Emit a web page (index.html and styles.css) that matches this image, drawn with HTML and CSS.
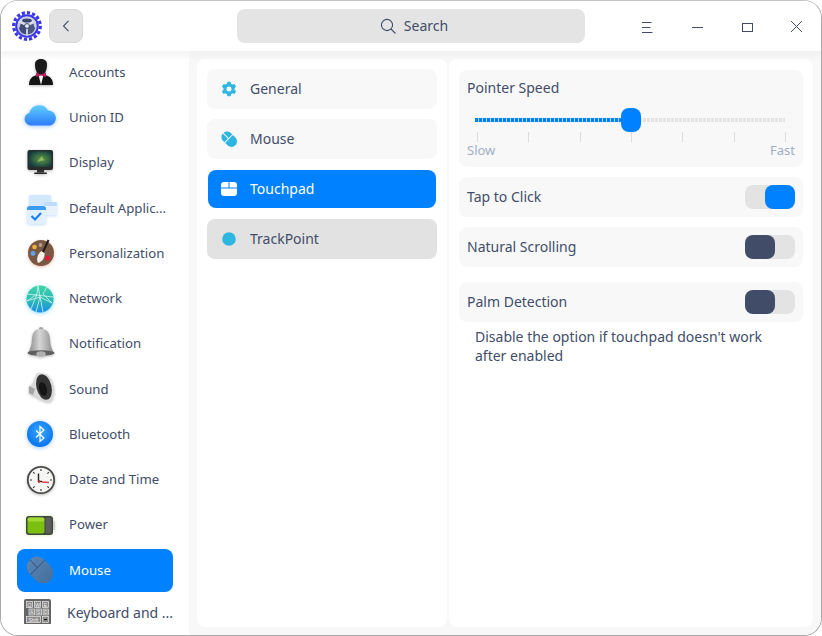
FILE: index.html
```html
<!DOCTYPE html>
<html lang="en">
<head>
<meta charset="utf-8">
<title>Control Center</title>
<link rel="stylesheet" href="styles.css">
</head>
<body>
<div class="window">
  <header class="titlebar">
    <svg class="logo" width="30" height="30" viewBox="0 0 30 30">
      <circle cx="15" cy="15" r="13.300" fill="none" stroke="#3b37e6" stroke-width="3.200" stroke-dasharray="3.200 1.980"/>
      <circle cx="15" cy="15" r="11.800" fill="#3b37e6"/>
      <circle cx="15" cy="15" r="9.800" fill="#c9cddd"/>
      <path d="M15 15 L8 10.500 A8.500 8.500 0 0 1 22 10.500 Z" fill="#d5d8e4"/>
      <ellipse cx="15" cy="9.500" rx="4.800" ry="2" fill="#3a4570"/>
      <path d="M15 15 L15 23.500 A8.500 8.500 0 0 1 7 17.500 L9 12 Z" fill="#414d78"/>
      <path d="M15 15 L21 12 L23 17.500 A8.500 8.500 0 0 1 15 23.500 Z" fill="#4c5883"/>
      <path d="M15 15 L15 24.500M15 15 L6.800 10.300M15 15 L23.200 10.300" stroke="#dfe1ea" stroke-width="1.700"/>
      <circle cx="15" cy="15" r="2.400" fill="#eceef4" stroke="#39446e" stroke-width="1"/>
    </svg>
    <button class="back" type="button" aria-label="Back">
      <svg width="8" height="12" viewBox="0 0 8 12"><path d="M6.500 .800 L1.500 6 L6.500 11.200" fill="none" stroke="#414d68" stroke-width="1.100"/></svg>
    </button>
    <div class="search">
      <svg width="17" height="17" viewBox="0 0 17 17"><circle cx="7" cy="7" r="5.600" fill="none" stroke="#414d68" stroke-width="1.100"/><path d="M11 11 L15.500 15.500" stroke="#414d68" stroke-width="1.100"/></svg>
      <span>Search</span>
    </div>
    <div class="controls">
      <svg class="ctl" width="50" height="50" viewBox="0 0 50 50"><path d="M21 21.500h9.500M21 26.500h8.500M21 31.500h10.500" stroke="#414d68" stroke-width="1" fill="none"/></svg>
      <svg class="ctl" width="50" height="50" viewBox="0 0 50 50"><path d="M21 26.500h11" stroke="#414d68" stroke-width="1" fill="none"/></svg>
      <svg class="ctl" width="50" height="50" viewBox="0 0 50 50"><rect x="21.500" y="22.500" width="10" height="8" stroke="#414d68" stroke-width="1" fill="none"/></svg>
      <svg class="ctl" width="50" height="50" viewBox="0 0 50 50"><path d="M20 20 L31 31M31 20 L20 31" stroke="#414d68" stroke-width="1" fill="none"/></svg>
    </div>
  </header>
  <div class="main">
    <nav class="sidebar">
      <a class="nav-item">
        <svg class="nav-icon shadow" width="36" height="36" viewBox="0 0 36 36"><path d="M7 30c0-6 3-9 8-10h8c5 1 8 4 8 10z" fill="#141414"/><path d="M13 9c0-3.500 3-5 6-5s6 1.500 6 5c0 6-2 11-6 11s-6-5-6-11z" fill="#1a1a1a"/><path d="M16.500 20l2.500 10 2.500-10z" fill="#f4f4f4"/><path d="M14 17.500l5 2 5-2v4.500l-5-1.500-5 1.500z" fill="#b5215f"/></svg>
        <span>Accounts</span>
      </a>
      <a class="nav-item">
        <svg class="nav-icon glow-blue" width="36" height="36" viewBox="0 0 36 36"><defs><linearGradient id="cloud" x1="0" y1="0" x2="0" y2="1"><stop offset="0" stop-color="#5fd0fb"/><stop offset="1" stop-color="#2d7bfb"/></linearGradient></defs><path d="M9 29a6.500 6.500 0 0 1-1.500-12.800A10 10 0 0 1 26 14a7.600 7.600 0 0 1 2 15z" fill="url(#cloud)" transform="translate(0 -3.500)"/></svg>
        <span>Union ID</span>
      </a>
      <a class="nav-item">
        <svg class="nav-icon shadow" width="36" height="36" viewBox="0 0 36 36"><defs><radialGradient id="scr" cx=".55" cy=".5" r=".6"><stop offset="0" stop-color="#5e9a4a"/><stop offset="1" stop-color="#123a3e"/></radialGradient></defs><rect x="5.500" y="5" width="25.500" height="20" rx="2" fill="#2b2b2b"/><rect x="6.700" y="6.300" width="23" height="15.500" fill="url(#scr)"/><path d="M15 17l5-6 1 3 2 1-5 1z" fill="#8fbf5a"/><rect x="15" y="25" width="7" height="2.500" fill="#333"/><rect x="12" y="27.500" width="13" height="1.500" rx=".7" fill="#2b2b2b"/></svg>
        <span>Display</span>
      </a>
      <a class="nav-item">
        <svg class="nav-icon soft-blue" width="36" height="36" viewBox="0 0 36 36"><rect x="7" y="5" width="22" height="12" rx="2" fill="#d3e8fd"/><rect x="22" y="12" width="13" height="13" rx="2" fill="#e8f2fc"/><rect x="22" y="12" width="13" height="4" rx="1.500" fill="#bcdcfa"/><rect x="5" y="16" width="19" height="18" rx="2.500" fill="#e2effe"/><path d="M5 20v-1.500a2.500 2.500 0 0 1 2.500-2.500h14a2.500 2.500 0 0 1 2.500 2.500V20z" fill="#3b9cf5"/><path d="M9.500 26l3.500 3.500 6-6.500" fill="none" stroke="#1a7ff2" stroke-width="2.200"/></svg>
        <span>Default Applic...</span>
      </a>
      <a class="nav-item">
        <svg class="nav-icon glow-red" width="36" height="36" viewBox="0 0 36 36"><circle cx="19" cy="18" r="13" fill="#7b5843"/><circle cx="12.500" cy="12" r="2.300" fill="#f0b03a"/><circle cx="18.500" cy="10" r="1.900" fill="#b29c8e"/><circle cx="11" cy="18.500" r="2.400" fill="#5aa5ee"/><circle cx="25.500" cy="23" r="2.500" fill="#e4183f"/><path d="M16 28c-2-4-.5-9 3.500-12l3 2c.5 4-1.500 8.500-6.500 10z" fill="#f4f1ec"/><path d="M21 17L26.500 5" stroke="#1d1d1d" stroke-width="2"/></svg>
        <span>Personalization</span>
      </a>
      <a class="nav-item">
        <svg class="nav-icon glow-cyan" width="36" height="36" viewBox="0 0 36 36"><defs><linearGradient id="net" x1="0" y1="0" x2="0" y2="1"><stop offset="0" stop-color="#3fd4a8"/><stop offset=".55" stop-color="#2bb8b6"/><stop offset="1" stop-color="#1a8ee8"/></linearGradient></defs><circle cx="18" cy="18" r="13.500" fill="url(#net)"/><path d="M16 5l-1 8-10 7 13-4 12 6-9-9 5-9M16 5l5 26M15 13L9 28M18 16l-4 15M5 13l26 3" stroke="#d6f5ee" stroke-width=".8" fill="none"/></svg>
        <span>Network</span>
      </a>
      <a class="nav-item">
        <svg class="nav-icon shadow" width="36" height="36" viewBox="0 0 36 36"><defs><linearGradient id="bell" x1="0" y1="0" x2="1" y2="0"><stop offset="0" stop-color="#858585"/><stop offset=".45" stop-color="#d6d6d6"/><stop offset="1" stop-color="#8a8a8a"/></linearGradient></defs><circle cx="19" cy="3" r="2" fill="#a0a0a0"/><path d="M19 3c-6.500 0-8.500 4-9 10-.3 6-1.500 10-4 14h26c-2.500-4-3.700-8-4-14-.5-6-2.500-10-9-10z" fill="url(#bell)"/><ellipse cx="19" cy="27" rx="13.500" ry="2.800" fill="#5f5f5f"/><ellipse cx="19" cy="28" rx="4.800" ry="2.700" fill="#b0b0b0"/></svg>
        <span>Notification</span>
      </a>
      <a class="nav-item">
        <svg class="nav-icon shadow" width="36" height="36" viewBox="0 0 36 36"><path d="M15 2l9 1c5 3 8 10 8 17 0 6-2 10-5 11-6-1-13-5-19-9l-.5-6c3-3 6-8 7.500-14z" fill="#d9d9d9"/><ellipse cx="22" cy="16" rx="7.500" ry="13" transform="rotate(-14 22 16)" fill="#333"/><ellipse cx="21" cy="18" rx="3.800" ry="7" transform="rotate(-14 21 18)" fill="#151515"/><path d="M7 15l6 3-2 6-4-2z" fill="#a3a3a3"/></svg>
        <span>Sound</span>
      </a>
      <a class="nav-item">
        <svg class="nav-icon glow-blue" width="36" height="36" viewBox="0 0 36 36"><defs><radialGradient id="bt" cx=".5" cy=".4" r=".6"><stop offset="0" stop-color="#38a9ff"/><stop offset="1" stop-color="#0873ee"/></radialGradient></defs><circle cx="18" cy="18" r="13" fill="url(#bt)"/><path d="M14 14.500l8 7.500-4 3.500v-15l4 3.500-8 7.500" fill="none" stroke="#fff" stroke-width="1.200"/></svg>
        <span>Bluetooth</span>
      </a>
      <a class="nav-item">
        <svg class="nav-icon shadow" width="36" height="36" viewBox="0 0 36 36"><circle cx="19" cy="18" r="13.200" fill="#f5f5f3" stroke="#4a4a4a" stroke-width="1.800"/><path d="M19 7v2M19 27v2M8 18h2M28 18h2M11.200 10.200l1.400 1.400M25.400 24.400l1.400 1.400M26.800 10.200l-1.400 1.400M12.600 24.400l-1.400 1.400" stroke="#333" stroke-width="1.100"/><path d="M16.500 11.500V19" stroke="#222" stroke-width="1.400"/><path d="M16.500 19.500H20" stroke="#222" stroke-width="1.400"/><path d="M20 20l7 .5" stroke="#d9434a" stroke-width="1.300"/><circle cx="17" cy="19.500" r="1.300" fill="#b3292f"/></svg>
        <span>Date and Time</span>
      </a>
      <a class="nav-item">
        <svg class="nav-icon glow-green" width="36" height="36" viewBox="0 0 36 36"><rect x="4" y="9" width="27" height="19" rx="3" fill="#3f4440"/><rect x="5.500" y="10.500" width="17" height="16" rx="2" fill="#7cc00f"/><rect x="5.500" y="10.500" width="17" height="4" rx="2" fill="#a2da33"/><rect x="23.500" y="10.500" width="6" height="16" fill="#5d5d5d"/><rect x="31" y="14" width="2" height="9" rx="1" fill="#d0d0d0"/></svg>
        <span>Power</span>
      </a>
      <a class="nav-item is-active">
        <svg class="nav-icon" width="36" height="36" viewBox="0 0 36 36"><defs><linearGradient id="mz" x1="0" y1="0" x2="0" y2="1"><stop offset="0" stop-color="#5b84b0"/><stop offset="1" stop-color="#44709f"/></linearGradient></defs><g transform="rotate(-45 18 18)"><rect x="7.800" y="3.500" width="20.500" height="29" rx="10" fill="url(#mz)"/><path d="M7.800 14.500h20.500M18 3.500v11" stroke="#2f5a8c" stroke-width="1"/></g></svg>
        <span>Mouse</span>
      </a>
      <a class="nav-item is-clipped">
        <svg class="nav-icon" width="36" height="36" viewBox="0 0 36 36"><path d="M3 30V7a2 2 0 0 1 2-2h23a2 2 0 0 1 2 2v23z" fill="#666"/><g fill="#8a8a8a" stroke="#ececec" stroke-width=".7"><rect x="5.500" y="7.500" width="6" height="6"/><rect x="13.500" y="7.500" width="6" height="6"/><rect x="21.500" y="7.500" width="6" height="6"/><rect x="8" y="15" width="5.500" height="6"/><rect x="15" y="15" width="5.500" height="6"/><rect x="22" y="15" width="5.500" height="6"/><rect x="5.500" y="22.500" width="14" height="6"/><rect x="21.500" y="22.500" width="6" height="6"/></g><path d="M23 25.500h3" stroke="#111" stroke-width="1"/><g class="key-caps"><text x="8.500" y="12.500">Q</text><text x="16.500" y="12.500">W</text><text x="24.500" y="12.500">E</text><text x="10.750" y="20">A</text><text x="17.750" y="20">S</text><text x="24.750" y="20">D</text><text x="12.500" y="27.500">Shift</text></g></svg>
        <span>Keyboard and ...</span>
      </a>
    </nav>
    <section class="panel panel-list">
      <a class="sub-item">
        <svg class="sub-icon" width="16" height="16" viewBox="0 0 16 16"><path fill="#2eb5e0" fill-rule="evenodd" d="M6.400.700h3.200l.4 2 1.500.9 2-.7 1.600 2.800-1.500 1.300v1.900l1.500 1.300-1.600 2.800-2-.7-1.500.9-.4 2H6.400l-.4-2-1.500-.9-2 .7L.9 10.200l1.500-1.300V7L.9 5.700l1.600-2.800 2 .7L6 2.700zM8 5.500a2.500 2.500 0 1 0 0 5 2.500 2.500 0 0 0 0-5z"/></svg>
        <span>General</span>
      </a>
      <a class="sub-item">
        <svg class="sub-icon" width="16" height="16" viewBox="0 0 16 16"><g transform="rotate(-45 8 8)"><path fill="#2eb5e0" d="M2.500 7h5V-.2A5 5 0 0 0 2.500 4.800zM8.500-.2V7h5V4.800a5 5 0 0 0-5-5zM2.500 8h11v3.500a5.500 5.500 0 0 1-11 0z"/></g></svg>
        <span>Mouse</span>
      </a>
      <a class="sub-item is-active">
        <svg class="sub-icon" width="18" height="16" viewBox="0 0 18 16"><path fill="#fff" d="M1 4a3 3 0 0 1 3-3h4.500v5.500H1zM9.500 1H14a3 3 0 0 1 3 3v2.500H9.500zM1 7.500h16V12a3 3 0 0 1-3 3H4a3 3 0 0 1-3-3z"/></svg>
        <span>Touchpad</span>
      </a>
      <a class="sub-item is-hover">
        <svg class="sub-icon" width="16" height="16" viewBox="0 0 16 16"><circle cx="8" cy="8" r="6.800" fill="#2eb5e0"/></svg>
        <span>TrackPoint</span>
      </a>
    </section>
    <section class="panel panel-detail">
      <div class="card card-slider">
        <div class="card-title">Pointer Speed</div>
        <div class="slider">
          <div class="track"><div class="fill"></div></div>
          <div class="thumb"></div>
        </div>
        <div class="ticks"><i></i><i></i><i></i><i></i><i></i><i></i><i></i></div>
        <div class="scale"><span>Slow</span><span>Fast</span></div>
      </div>
      <div class="card card-row"><span>Tap to Click</span><div class="switch is-on"><div class="knob"></div></div></div>
      <div class="card card-row"><span>Natural Scrolling</span><div class="switch"><div class="knob"></div></div></div>
      <div class="card card-row card-palm"><span>Palm Detection</span><div class="switch"><div class="knob"></div></div></div>
      <p class="note">Disable the option if touchpad doesn't work after enabled</p>
    </section>
  </div>
</div>
</body>
</html>
```

FILE: styles.css
```css
* { box-sizing: border-box; }
html, body { margin: 0; height: 100%; background: #ffffff; }
body { font-family: "Noto Sans", sans-serif; font-size: 14px; color: #414d68; }

.window {
  width: 822px;
  height: 636px;
  display: flex;
  flex-direction: column;
  border: 1px solid #a9a9a9;
  border-top-color: #c4c4c4;
  border-radius: 18px;
  overflow: hidden;
  background: #fff;
}

.titlebar {
  height: 50px;
  flex: none;
  display: flex;
  align-items: center;
  background: #fff;
  padding: 0 0 0 11px;
}
.logo { flex: none; margin-right: 7px; }
.back {
  width: 34px;
  height: 34px;
  padding: 0;
  border: 1px solid #d8d8d8;
  border-radius: 8px;
  background: #e3e3e3;
  display: flex;
  align-items: center;
  justify-content: center;
  margin-right: 154px;
}
.search {
  width: 348px;
  height: 34px;
  border-radius: 8px;
  background: #e4e4e4;
  display: flex;
  align-items: center;
  justify-content: center;
  gap: 7px;
  padding-left: 6px;
}
.search span { margin-bottom: 2px; }
.controls { margin-left: auto; display: flex; }
.ctl { display: block; }

.main {
  flex: 1;
  min-height: 0;
  display: flex;
  background: linear-gradient(#f1f1f1, #f8f8f8 10px);
}

.sidebar {
  width: 188px;
  flex: none;
  background: linear-gradient(#f4f4f4, #ffffff 10px);
  padding: 0 16px;
  display: flex;
  flex-direction: column;
  gap: 2.240px;
  overflow: hidden;
}
.nav-item {
  flex: none;
  height: 43px;
  display: flex;
  align-items: center;
  border-radius: 8px;
  padding-left: 5px;
  white-space: nowrap;
  color: #414d68;
}
.nav-icon { flex: none; margin-right: 11px; }
.nav-item span { font-size: 13.200px; margin-bottom: 1px; }
.nav-item.is-active { background: #0081ff; color: #fff; }
.nav-item.is-clipped { height: 41px; padding-left: 4px; margin-top: -2px; }
.nav-item.is-clipped .nav-icon { margin-right: 10px; }
.nav-item.is-clipped span { font-size: 14px; margin-bottom: 0; }

.shadow { filter: drop-shadow(0 1px 1.500px rgba(0, 0, 0, .28)); }
.glow-blue { filter: drop-shadow(0 1.500px 2px rgba(40, 130, 250, .45)); }
.soft-blue { filter: drop-shadow(0 1px 1.500px rgba(60, 150, 250, .3)); }
.glow-red { filter: drop-shadow(0 1px 1.500px rgba(200, 80, 40, .4)); }
.glow-cyan { filter: drop-shadow(0 1px 2px rgba(30, 190, 250, .5)); }
.glow-green { filter: drop-shadow(0 0 1.500px rgba(150, 210, 50, .5)); }
.key-caps text {
  font-family: "Liberation Sans", sans-serif;
  font-size: 5px;
  fill: #f2f2f2;
  text-anchor: middle;
}

.panel {
  background: #fff;
  border-radius: 8px;
  margin-top: 8px;
  margin-bottom: 8px;
}
.panel-list {
  width: 250px;
  margin-left: 8px;
  margin-right: 2px;
  padding: 10px;
  display: flex;
  flex-direction: column;
}
.sub-item {
  height: 40px;
  flex: none;
  display: flex;
  align-items: center;
  background: #f8f8f8;
  border-radius: 8px;
  margin-bottom: 10px;
  padding-left: 14px;
}
.sub-item span { margin-bottom: 2px; }
.sub-icon { flex: none; margin-right: 13px; }
.sub-item:nth-child(3) .sub-icon { margin-right: 12px; margin-left: -1px; }
.sub-item.is-active {
  background: #0081ff;
  color: #fff;
  height: 38px;
  margin: 1px 1px 11px;
  padding-left: 13px;
}
.sub-item.is-hover { background: #e2e2e2; }

.panel-detail {
  width: 364px;
  padding: 11px 10px;
  display: flex;
  flex-direction: column;
}
.card {
  background: #f8f8f8;
  border-radius: 8px;
  padding: 0 8px;
  margin-bottom: 10px;
}
.card-slider { height: 97px; padding-top: 8px; }
.card-title { line-height: 20px; }
.slider { position: relative; height: 24px; margin-top: 10px; }
.track {
  position: absolute;
  left: 8px;
  right: 10px;
  top: 10px;
  height: 4px;
  background: repeating-linear-gradient(90deg, #e4e4e4 0 3px, transparent 3px 4px);
}
.fill {
  width: 50%;
  height: 100%;
  background: repeating-linear-gradient(90deg, #0081ff 0 3px, #a8d2ff 3px 4px);
}
.thumb {
  position: absolute;
  left: 154px;
  top: 0;
  width: 20px;
  height: 24px;
  border-radius: 8px;
  background: #0081ff;
}
.ticks {
  display: flex;
  justify-content: space-between;
  height: 10px;
  padding: 0 9px 0 10px;
}
.ticks i { display: block; width: 1px; height: 10px; background: #dcdcdc; }
.scale {
  display: flex;
  justify-content: space-between;
  line-height: 16px;
  color: #a0afc4;
  font-size: 13px;
}
.card-row {
  height: 40px;
  display: flex;
  align-items: center;
  justify-content: space-between;
}
.card-row span { margin-bottom: 2px; }
.card-palm { margin-top: 5px; margin-bottom: 0; }
.switch {
  width: 50px;
  height: 24px;
  border-radius: 8px;
  background: #e3e3e3;
  display: flex;
}
.knob { width: 30px; height: 24px; border-radius: 8px; background: #414d68; }
.switch.is-on { justify-content: flex-end; }
.switch.is-on .knob { background: #0081ff; }
.note { margin: 5px 16px 0; line-height: 19px; }
```
